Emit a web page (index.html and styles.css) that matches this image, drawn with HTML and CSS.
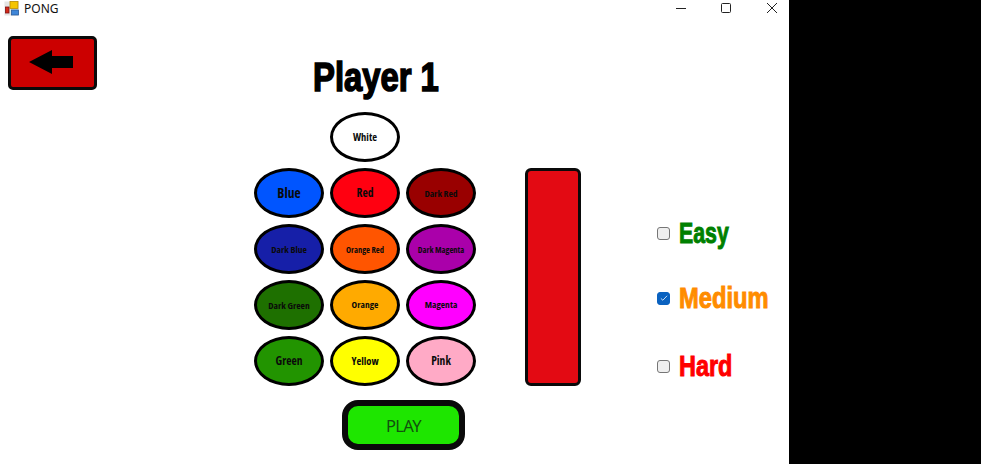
FILE: index.html
```html
<!DOCTYPE html>
<html lang="en">
<head>
<meta charset="utf-8">
<title>PONG</title>
<link rel="stylesheet" href="styles.css">
</head>
<body>
<div class="window">
  <header class="titlebar">
    <svg class="app-icon" width="16" height="16" viewBox="0 0 16 16">
      <rect x="0.5" y="1.5" width="14" height="14" fill="#e4e4e4"/>
      <rect x="6" y="1.5" width="8" height="7" fill="#f5c400" stroke="#b98a00" stroke-width="0.8"/>
      <rect x="7.5" y="10" width="7" height="5" fill="#3f86d8" stroke="#2a5a9a" stroke-width="0.8"/>
      <rect x="1.5" y="7" width="3.5" height="6" fill="#d42a1a" stroke="#801010" stroke-width="0.8"/>
    </svg>
    <span class="app-title">PONG</span>
    <div class="controls">
      <svg class="ctl" width="46" height="16" viewBox="0 0 46 16"><path d="M19 8.5H29" stroke="#222" fill="none"/></svg>
      <svg class="ctl" width="46" height="16" viewBox="0 0 46 16"><rect x="18.5" y="3.5" width="9" height="9" rx="1" stroke="#222" fill="none"/></svg>
      <svg class="ctl" width="40" height="16" viewBox="0 0 40 16"><path d="M18 3L28 13M28 3L18 13" stroke="#222" fill="none"/></svg>
    </div>
  </header>
  <main class="body">
    <div class="col-back">
      <button class="back" type="button" aria-label="Back">
        <svg width="45" height="24" viewBox="0 0 45 24"><path d="M0 12L23 0V6H44V18H23V24Z" fill="#000"/></svg>
      </button>
    </div>
    <div class="col-pick">
      <h1 class="heading"><span class="heading-text">Player 1</span></h1>
      <div class="palette">
        <span class="blank"></span>
        <button class="oval white f10" type="button">White</button>
        <span class="blank"></span>
        <button class="oval blue f13" type="button">Blue</button>
        <button class="oval red f11 raised" type="button">Red</button>
        <button class="oval darkred f95" type="button">Dark Red</button>
        <button class="oval darkblue f95" type="button">Dark Blue</button>
        <button class="oval orangered f85" type="button">Orange Red</button>
        <button class="oval darkmagenta f85" type="button">Dark Magenta</button>
        <button class="oval darkgreen f95" type="button">Dark Green</button>
        <button class="oval orange f95 raised" type="button">Orange</button>
        <button class="oval magenta f95 raised" type="button">Magenta</button>
        <button class="oval green f11 raised" type="button">Green</button>
        <button class="oval yellow f10" type="button">Yellow</button>
        <button class="oval pink f11 raised" type="button">Pink</button>
      </div>
      <button class="play" type="button">PLAY</button>
    </div>
    <div class="col-paddle"><div class="paddle"></div></div>
    <div class="col-level">
      <div class="level">
        <span class="check"></span><span class="level-name easy">Easy</span>
      </div>
      <div class="level">
        <span class="check on"><svg width="8" height="8" viewBox="0 0 9 9"><path d="M1 5L3.2 7L8 2" stroke="#fff" stroke-width="0.9" fill="none"/></svg></span><span class="level-name medium">Medium</span>
      </div>
      <div class="level level-last">
        <span class="check"></span><span class="level-name hard">Hard</span>
      </div>
    </div>
  </main>
</div>
</body>
</html>
```
FILE: styles.css
```css
* { box-sizing: border-box; }
html, body { margin: 0; height: 100%; background: #000; overflow: hidden; }
body { width: 981px; height: 464px; }
.window { width: 789px; height: 464px; background: #fff; display: flex; flex-direction: column; }

.titlebar { height: 16px; flex: none; display: flex; align-items: center; font: 12px "Noto Sans", "Open Sans", sans-serif; color: #111; }
.app-icon { margin-left: 4px; }
.app-title { margin-left: 4px; }
.controls { margin-left: auto; display: flex; }
.ctl { display: block; }

.body { flex: 1; display: flex; }
.col-back { width: 254px; flex: none; padding: 20px 0 0 8px; }
.back { width: 89px; height: 54px; padding: 0 0 2px 18px; display: flex; align-items: center; background: #cc0000; border: 3px solid #0a0a0a; border-radius: 5px; }
.back svg { display: block; }

.col-pick { width: 222px; flex: none; display: flex; flex-direction: column; }
.heading { height: 96px; margin: 0; padding: 38px 0 0 59px; font: 700 40px/46px "Liberation Sans", sans-serif; color: #000; white-space: nowrap; }
.heading-text { display: inline-block; transform: scaleX(0.82); transform-origin: left center; -webkit-text-stroke: 1.6px #000; }

.palette { display: grid; grid-template-columns: repeat(3, 70px); grid-auto-rows: 50px; gap: 6px; }
.oval { width: 70px; height: 50px; padding: 0; border: 3px solid #000; border-radius: 50%; font-family: "Open Sans", "Noto Sans", sans-serif; font-weight: 700; font-stretch: condensed; color: #0a0a0a; white-space: nowrap; display: flex; align-items: center; justify-content: center; }
.raised { padding-bottom: 2px; }
.f85 { font-size: 8.5px; }
.f95 { font-size: 9.5px; }
.f10 { font-size: 10.5px; }
.f11 { font-size: 11.5px; }
.f13 { font-size: 13.5px; }
.white { background: #fff; }
.blue { background: #0055ff; }
.red { background: #ff0010; }
.darkred { background: #990000; }
.darkblue { background: #161fa8; }
.orangered { background: #ff5500; }
.darkmagenta { background: #aa00aa; }
.darkgreen { background: #1e7000; }
.orange { background: #ffaa00; }
.magenta { background: #ff00ff; }
.green { background: #229400; }
.yellow { background: #ffff00; }
.pink { background: #ffaac6; }

.play { width: 123px; height: 50px; margin: 14px 0 0 88px; padding: 0; background: #1ee600; border: 6px solid #0a0a0a; border-radius: 16px; font: 16.5px "Noto Sans", "Open Sans", sans-serif; letter-spacing: -0.6px; color: #12500f; }

.col-paddle { flex: none; margin-left: 49px; padding-top: 152px; }
.paddle { width: 56px; height: 218px; background: #e30a13; border: 3px solid #0a0a0a; border-radius: 6px; }

.col-level { flex: none; margin-left: 76px; padding-top: 200px; display: flex; flex-direction: column; gap: 31px; }
.level { height: 34px; display: flex; align-items: center; }
.level-last { margin-top: 3px; }
.check { width: 13px; height: 13px; flex: none; background: #efefef; border: 1px solid #767676; border-radius: 3px; display: flex; align-items: center; justify-content: center; }
.check.on { background: #0a62c0; border-color: #0a62c0; }
.level-name { display: inline-block; margin-left: 9px; font: 700 30px/34px "Liberation Sans", sans-serif; transform-origin: left center; -webkit-text-stroke: 1px currentColor; white-space: nowrap; }
.easy { color: #008000; transform: scaleX(0.71); }
.medium { color: #ff8c00; transform: scaleX(0.79); }
.hard { color: #ff0000; transform: scaleX(0.78); }
```
